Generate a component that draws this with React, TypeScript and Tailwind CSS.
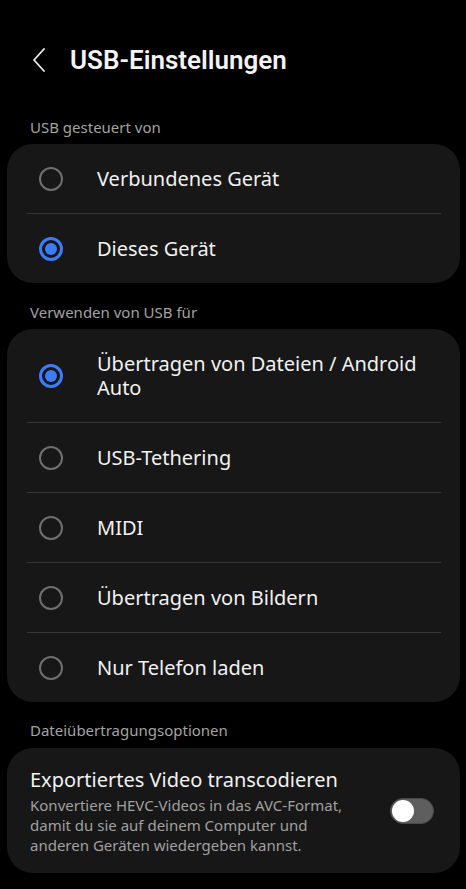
import React from 'react';

const FONT = { fontFamily: '"Noto Sans", Roboto, sans-serif' };
const TITLE_FONT = { fontFamily: 'Roboto, "Noto Sans", sans-serif' };

function Radio({ checked }: { checked: boolean }) {
  if (checked) {
    return (
      <span className="flex h-[24px] w-[24px] shrink-0 items-center justify-center rounded-full border-[3px] border-[#3e7cf7]">
        <span className="h-[12px] w-[12px] rounded-full bg-[#3e7cf7]" />
      </span>
    );
  }
  return <span className="h-[24px] w-[24px] shrink-0 rounded-full border-2 border-[#6f6f6f]" />;
}

function Divider() {
  return <div className="ml-[20px] mr-[19px] h-px bg-[#363636]" />;
}

function Row({ label, checked, tall }: { label: string; checked?: boolean; tall?: boolean }) {
  return (
    <div className={`flex items-center ${tall ? 'h-[93px]' : 'h-[69px]'}`}>
      <div className="flex w-[90px] shrink-0 pl-[32px]">
        <Radio checked={!!checked} />
      </div>
      <span className="pr-[24px] text-[20px] leading-[24px] text-[#f1f1f1]">{label}</span>
    </div>
  );
}

function Label({ children, className }: { children: React.ReactNode; className: string }) {
  return (
    <div className={`pl-[30px] text-[15px] leading-[20px] text-[#a3a3a3] ${className}`}>{children}</div>
  );
}

export default function App() {
  const usage = ['USB-Tethering', 'MIDI', 'Übertragen von Bildern', 'Nur Telefon laden'];
  return (
    <div className="min-h-[889px] w-[466px] bg-black pb-[17px] pt-[40px]" style={FONT}>
      <div className="flex h-[40px] items-center">
        <svg width="14" height="24" viewBox="0 0 14 24" className="ml-[32px]">
          <path d="M12 1 L2 12 L12 23" fill="none" stroke="#ededed" strokeWidth="1.8" strokeLinecap="round" strokeLinejoin="round" />
        </svg>
        <h1 className="ml-[24px] text-[26px] font-semibold leading-[32px] text-[#f3f3f3]" style={TITLE_FONT}>
          USB-Einstellungen
        </h1>
      </div>

      <Label className="mt-[37px] mb-[7px]">USB gesteuert von</Label>
      <div className="ml-[7px] mr-[6px] rounded-[26px] bg-[#171717]">
        <Row label="Verbundenes Gerät" />
        <Divider />
        <Row label="Dieses Gerät" checked />
      </div>

      <Label className="mt-[19px] mb-[7px]">Verwenden von USB für</Label>
      <div className="ml-[7px] mr-[6px] rounded-[26px] bg-[#171717]">
        <Row label="Übertragen von Dateien / Android Auto" checked tall />
        {usage.map((u) => (
          <React.Fragment key={u}>
            <Divider />
            <Row label={u} />
          </React.Fragment>
        ))}
      </div>

      <Label className="mt-[18px] mb-[8px]">Dateiübertragungsoptionen</Label>
      <div className="ml-[7px] mr-[6px] flex items-center rounded-[26px] bg-[#171717] pb-[18px] pl-[23px] pr-[26px] pt-[19px]">
        <div className="flex-1 pr-[28px]">
          <div className="text-[20px] leading-[26px] text-[#f1f1f1]">Exportiertes Video transcodieren</div>
          <div className="mt-[2px] text-[15px] leading-[20px] text-[#a0a0a0]">
            Konvertiere HEVC-Videos in das AVC-Format, damit du sie auf deinem Computer und anderen Geräten wiedergeben kannst.
          </div>
        </div>
        <div className="flex h-[26px] w-[44px] shrink-0 items-center rounded-full border border-[#4a4a4a] bg-[#5e5e5e] pl-[1px]">
          <span className="h-[22px] w-[22px] rounded-full bg-white" />
        </div>
      </div>
    </div>
  );
}
